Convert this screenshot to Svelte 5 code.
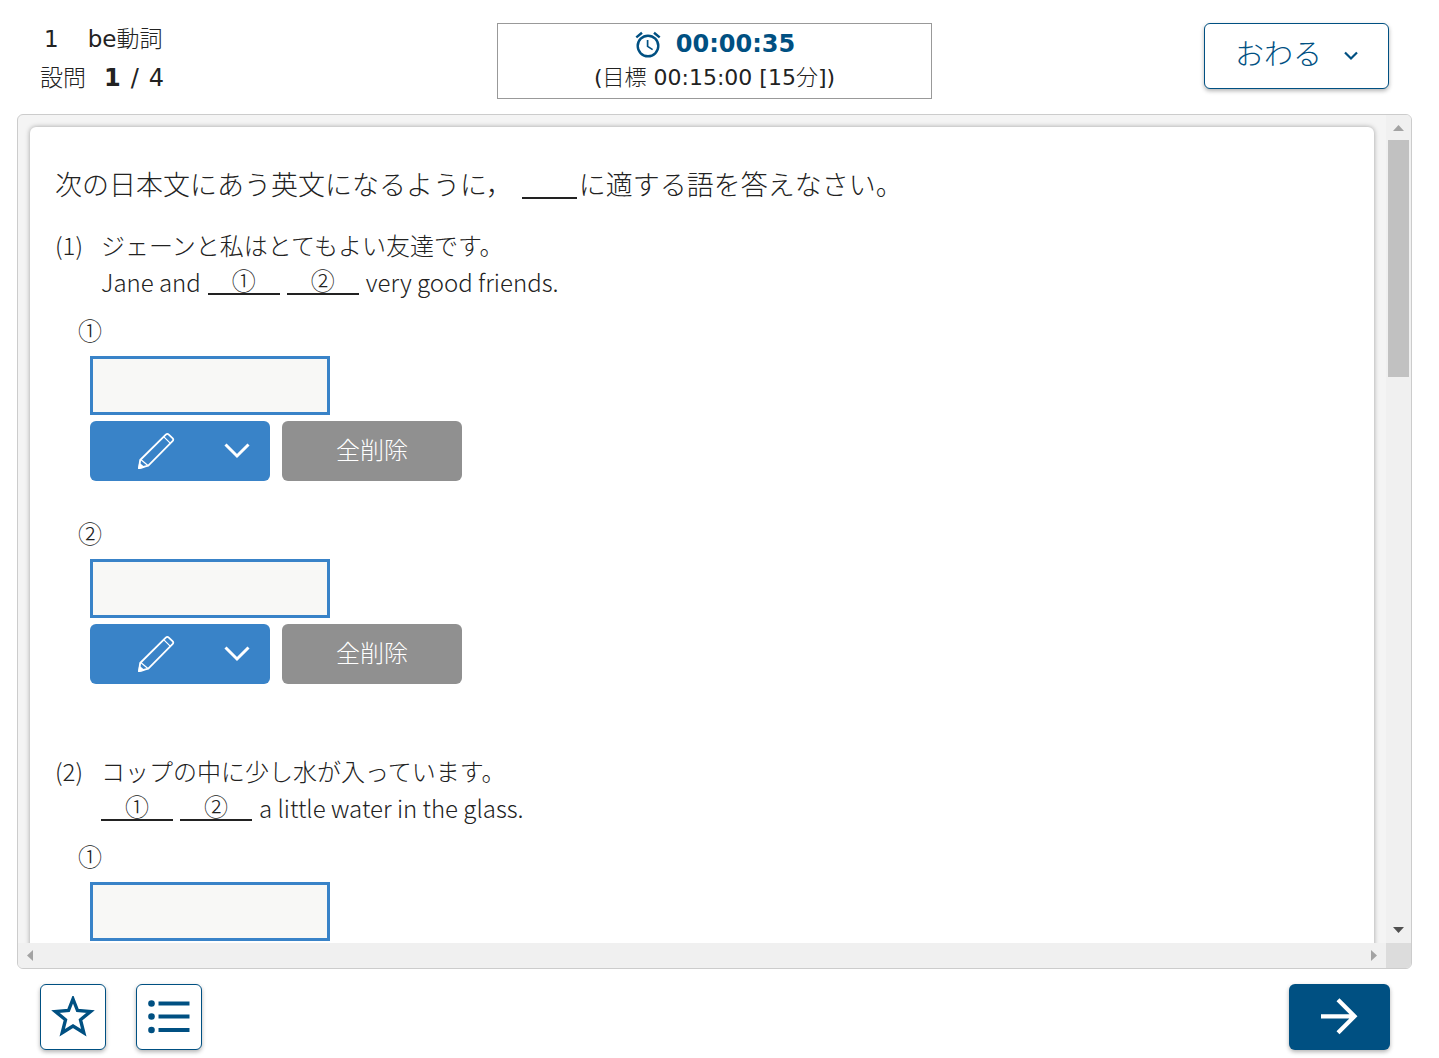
<script lang="ts">
  type Part = { text?: string; blank?: string };

  const questions: { no: number; japanese: string; english: Part[]; answers: string[] }[] = [
    {
      no: 1,
      japanese: 'ジェーンと私はとてもよい友達です。',
      english: [{ text: 'Jane and' }, { blank: '①' }, { blank: '②' }, { text: 'very good friends.' }],
      answers: ['①', '②'],
    },
    {
      no: 2,
      japanese: 'コップの中に少し水が入っています。',
      english: [{ blank: '①' }, { blank: '②' }, { text: 'a little water in the glass.' }],
      answers: ['①'],
    },
  ];

  let values: Record<string, string> = $state({});

  function clear(key: string) {
    values[key] = '';
  }
</script>

<div class="app">
  <header>
    <div class="unit">
      <div class="unit-name"><span>1</span><span>be<span class="kanji">動詞</span></span></div>
      <div class="progress"><span class="kanji">設問</span><span class="count"><b>1</b><span>/</span><span>4</span></span></div>
    </div>

    <div class="timer">
      <div class="elapsed">
        <svg width="28" height="28" viewBox="0 0 28 28" fill="none" stroke="currentColor" aria-hidden="true">
          <circle cx="14" cy="16" r="10.3" stroke-width="2.4" />
          <path d="M13.6 10v6.4l5 3.2" stroke-width="1.7" />
          <path d="M2.3 7.4 8 2.7M25.7 7.4 20 2.7" stroke-width="2.4" />
        </svg>
        <span>00:00:35</span>
      </div>
      <div class="target">(<span class="kanji">目標</span> 00:15:00 [15<span class="kanji">分</span>])</div>
    </div>

    <button type="button" class="outline finish">
      <span>おわる</span>
      <svg width="14" height="10" viewBox="0 0 14 10" fill="none" stroke="currentColor" stroke-width="2.2" aria-hidden="true">
        <path d="m1 1.5 6 6 6-6" />
      </svg>
    </button>
  </header>

  <main>
    <div class="viewport">
      <article>
        <h1>次の日本文にあう英文になるように，<span class="gap"></span>に適する語を答えなさい。</h1>

        {#each questions as q}
          <section>
            <div class="question">
              <span class="no">({q.no})</span>
              <div>
                <p>{q.japanese}</p>
                <p class="english">
                  {#each q.english as part}
                    {#if part.blank}
                      <span class="blank">{part.blank}</span>
                    {:else}
                      <span>{part.text}</span>
                    {/if}
                  {/each}
                </p>
              </div>
            </div>

            {#each q.answers as label}
              {@const key = `q${q.no}-${label}`}
              <div class="answer">
                <label for={key}>{label}</label>
                <input id={key} type="text" autocomplete="off" bind:value={values[key]} />
                <div class="tools">
                  <button type="button" class="pen" aria-label="手書き入力">
                    <svg width="38" height="38" viewBox="0 0 38 38" fill="none" stroke="currentColor" stroke-width="1.8" stroke-linejoin="round" aria-hidden="true">
                      <path d="M2 36.2 3.2 28 28.8 2.6q1.5-1.4 3 0l3.7 3.6q1.5 1.5 0 3L11.3 33.6Z" />
                      <path d="m3.8 27.5 7.4 6.300M26.900 4.800l6.300 6.300" stroke-width="1.2" />
                      <path d="m2 36.2.8-4 3.700 3Z" fill="currentColor" />
                    </svg>
                    <svg width="26" height="16" viewBox="0 0 26 16" fill="none" stroke="currentColor" stroke-width="3" aria-hidden="true">
                      <path d="M1.5 1.5 13 13 24.5 1.5" />
                    </svg>
                  </button>
                  <button type="button" class="clear" onclick={() => clear(key)}>全削除</button>
                </div>
              </div>
            {/each}
          </section>
        {/each}
      </article>
    </div>

    <div class="bar vertical" aria-hidden="true">
      <svg class="muted" width="11" height="6" viewBox="0 0 11 6"><path d="M0 6 5.5 0 11 6Z" /></svg>
      <div class="track"><div class="thumb"></div></div>
      <svg width="11" height="6" viewBox="0 0 11 6"><path d="M0 0h11L5.5 6Z" /></svg>
    </div>
    <div class="bar horizontal" aria-hidden="true">
      <svg class="muted" width="6" height="11" viewBox="0 0 6 11"><path d="M6 0v11L0 5.5Z" /></svg>
      <svg class="muted" width="6" height="11" viewBox="0 0 6 11"><path d="M0 0v11L6 5.5Z" /></svg>
    </div>
    <div class="corner"></div>
  </main>

  <footer>
    <button type="button" class="outline square" aria-label="お気に入り">
      <svg width="44" height="42" viewBox="0 0 44 42" fill="none" stroke="currentColor" stroke-width="3.4" aria-hidden="true">
        <path d="m22 3 4.500 11.500 13 1-10 8.300 3.300 13-10.800-6.800-10.800 6.800 3.300-13-10-8.300 13-1Z" />
      </svg>
    </button>
    <button type="button" class="outline square" aria-label="問題一覧">
      <svg width="42" height="34" viewBox="0 0 42 34" fill="currentColor" aria-hidden="true">
        <circle cx="3.5" cy="3.5" r="3.3" /><path d="M10.500 1.500h31v4h-31z" />
        <circle cx="3.5" cy="16.5" r="3.3" /><path d="M10.500 14.500h31v4h-31z" />
        <circle cx="3.5" cy="30" r="3.3" /><path d="M10.500 28h31v4h-31z" />
      </svg>
    </button>
    <button type="button" class="next" aria-label="次へ">
      <svg width="38" height="38" viewBox="0 0 38 38" fill="none" stroke="currentColor" stroke-width="4.2" aria-hidden="true">
        <path d="M0 18.300h33M17 1.800l16.500 16.500L17 34.800" />
      </svg>
    </button>
  </footer>
</div>

<style>
  :global(body) {
    margin: 0;
    background: #fff;
  }

  .app {
    --navy: #005082;
    --blue: #3983c8;
    display: flex;
    flex-direction: column;
    height: 100vh;
    color: #222;
    font-family: 'DejaVu Sans', 'Noto Sans CJK JP', sans-serif;
  }
  button {
    padding: 0;
    font: inherit;
    cursor: pointer;
  }
  .kanji { font-weight: 300; }

  /* Header */
  header {
    display: grid;
    grid-template-columns: 1fr minmax(auto, 435px) 1fr;
    align-items: start;
    padding: 20px 50px 15px 40px;
  }
  .unit {
    font-size: 23px;
    line-height: 39px;
  }
  .unit-name, .progress, .count { display: flex; }
  .unit-name { gap: 29px; padding-left: 4px; }
  .progress { gap: 18px; }
  .count { gap: 10px; font-size: 24px; }
  .count b { font-weight: 700; }

  .timer {
    box-sizing: border-box;
    height: 76px;
    margin-top: 3px;
    padding-top: 3px;
    border: 1px solid #999;
    text-align: center;
    font-size: 22px;
    line-height: 34px;
  }
  .elapsed {
    display: flex;
    align-items: center;
    justify-content: center;
    gap: 14px;
    color: var(--navy);
    font-size: 24px;
    font-weight: 700;
  }

  .outline {
    display: flex;
    align-items: center;
    justify-content: center;
    box-sizing: border-box;
    height: 66px;
    border: 1px solid var(--navy);
    border-radius: 6px;
    background: #fff;
    color: var(--navy);
    box-shadow: 0 2px 4px rgba(0, 0, 0, 0.3);
  }
  .finish {
    justify-self: end;
    gap: 22px;
    width: 185px;
    margin-top: 3px;
    font-size: 29px;
    font-weight: 300;
  }
  .finish span { padding-bottom: 8px; }

  /* Question panel */
  main {
    display: grid;
    flex: 1;
    grid-template-columns: 1fr 25px;
    grid-template-rows: 1fr 25px;
    min-height: 0;
    margin: 0 27px 0 17px;
    border: 1px solid #ccc;
    border-radius: 6px;
    background: #f4f4f4;
    overflow: hidden;
  }
  .viewport {
    min-height: 0;
    padding: 12px 12px 0;
    overflow: auto;
    scrollbar-width: none;
  }
  article {
    padding: 35px 25px;
    border-radius: 6px;
    background: #fff;
    box-shadow: 0 0 5px rgba(0, 0, 0, 0.35);
    font-family: 'Noto Sans CJK JP', sans-serif;
    font-weight: 300;
  }
  h1 {
    margin: 0 0 20px;
    font-size: 27px;
    font-weight: 300;
    line-height: 44px;
  }
  .gap {
    display: inline-block;
    width: 55px;
    height: 22px;
    margin: 0 2px 0 9px;
    border-bottom: 2px solid #222;
    vertical-align: -4px;
  }
  section { margin-bottom: 34px; }
  .question {
    display: flex;
    margin-bottom: 12px;
    font-size: 24px;
    line-height: 37px;
  }
  .no { width: 46px; }
  p { margin: 0; }
  .english {
    display: flex;
    align-items: center;
    gap: 7px;
  }
  .blank {
    width: 72px;
    height: 25px;
    border-bottom: 2px solid #222;
    line-height: 24px;
    text-align: center;
  }

  .answer {
    display: flex;
    flex-direction: column;
    align-items: flex-start;
    padding: 0 0 34px 35px;
  }
  label {
    margin: 0 0 9px -12px;
    font-size: 24px;
    line-height: 35px;
  }
  input {
    box-sizing: border-box;
    width: 240px;
    height: 59px;
    margin: 0 0 6px;
    padding: 0 12px;
    border: 3px solid var(--blue);
    border-radius: 0;
    background: #f8f8f6;
    font: inherit;
    font-size: 24px;
  }
  .tools { display: flex; gap: 12px; }
  .pen, .clear {
    width: 180px;
    height: 60px;
    border: none;
    border-radius: 6px;
    color: #fff;
    font-size: 24px;
  }
  .pen {
    display: flex;
    align-items: center;
    justify-content: space-between;
    padding: 0 20px 0 47px;
    background: var(--blue);
  }
  .clear {
    padding-bottom: 6px;
    background: #909090;
  }

  /* Scrollbars */
  .bar {
    display: flex;
    align-items: center;
    background: #f0f0f0;
    fill: #505050;
  }
  .muted { fill: #a3a3a3; }
  .vertical {
    flex-direction: column;
    padding: 10px 0;
  }
  .horizontal {
    justify-content: space-between;
    padding: 0 9px;
  }
  .track {
    flex: 1;
    width: 21px;
    margin: 9px 0;
  }
  .thumb {
    height: 30.4%;
    background: #c1c1c1;
  }
  .corner { background: #dcdcdc; }

  /* Footer */
  footer {
    display: flex;
    gap: 30px;
    padding: 15px 49px 8px 40px;
  }
  .square { width: 66px; }
  .next {
    display: flex;
    align-items: center;
    justify-content: center;
    width: 101px;
    height: 66px;
    margin-left: auto;
    border: none;
    border-radius: 6px;
    background: var(--navy);
    color: #fff;
    box-shadow: 0 2px 4px rgba(0, 0, 0, 0.3);
  }
</style>
